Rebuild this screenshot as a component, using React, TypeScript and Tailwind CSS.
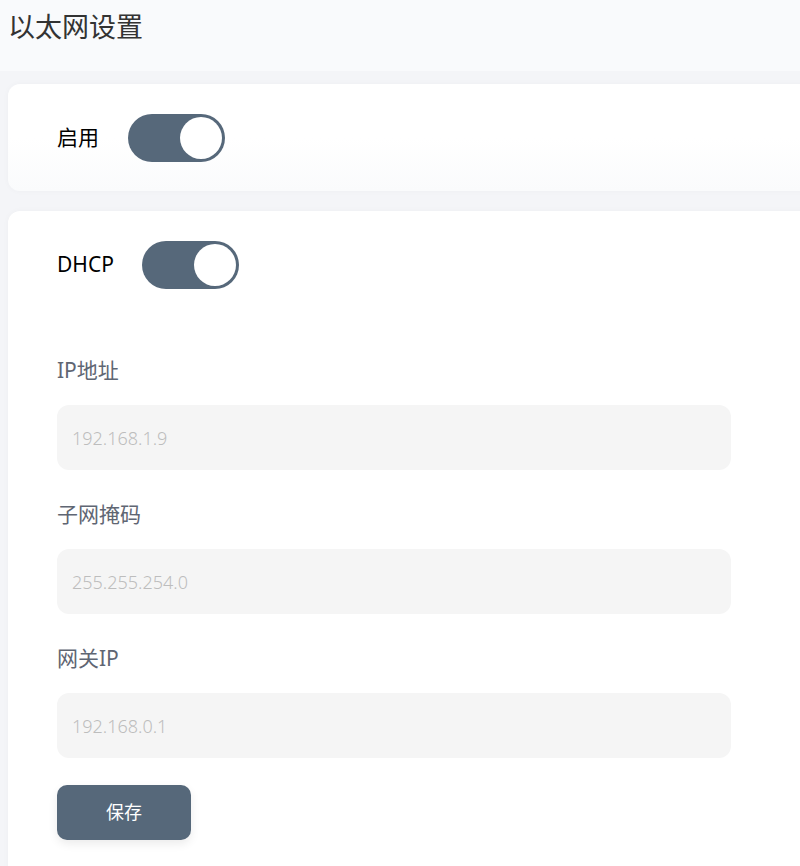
import { useState } from "react";

const FONT = "font-['Noto_Sans','Noto_Sans_CJK_SC',sans-serif]";

// 开关组件
function Toggle({ on, onChange }: { on: boolean; onChange: () => void }) {
  return (
    <button
      type="button"
      onClick={onChange}
      className={`relative h-[48px] w-[97px] shrink-0 rounded-full ${
        on ? "bg-[#56687a]" : "bg-[#cfd4da]"
      }`}
    >
      <span
        className={`absolute top-[3px] h-[42px] w-[42px] rounded-full bg-white ${
          on ? "right-[3px]" : "left-[3px]"
        }`}
      />
    </button>
  );
}

// 表单字段
function Field({ label, value }: { label: string; value: string }) {
  return (
    <div className="flex flex-col">
      <label className="h-[24px] text-[21px] leading-[24px] text-[#5f6673]">
        {label}
      </label>
      <input
        className="mt-[23px] h-[65px] w-[674px] rounded-[12px] bg-[#f5f5f5] px-[15px] text-[18px] font-light text-[#333] placeholder:text-[#bdbdbd] outline-none"
        placeholder={value}
      />
    </div>
  );
}

export default function App() {
  const [enabled, setEnabled] = useState(true);
  const [dhcp, setDhcp] = useState(true);

  return (
    <div className={`${FONT} min-h-[866px] overflow-hidden bg-[#f4f5f8]`}>
      {/* 标题 */}
      <div className="flex h-[71px] items-start bg-[#f9fafc] pl-[8px] pt-[7px]">
        <h1 className="text-[27px] leading-[40px] text-[#333]">以太网设置</h1>
      </div>

      {/* 启用 */}
      <div className="ml-[8px] mt-[13px] flex h-[107px] w-[820px] items-center gap-[29px] rounded-[12px] bg-gradient-to-b from-white from-50% to-[#fafbfc] pl-[49px] shadow-[0_0_6px_rgba(0,0,0,0.03)]">
        <span className="text-[21px] text-black">启用</span>
        <Toggle on={enabled} onChange={() => setEnabled(!enabled)} />
      </div>

      {/* DHCP 与地址 */}
      <div className="ml-[8px] mt-[20px] flex w-[820px] flex-col rounded-[12px] bg-white pb-[40px] pl-[49px] pt-[30px] shadow-[0_0_6px_rgba(0,0,0,0.03)]">
        <div className="flex h-[48px] items-center gap-[28px]">
          <span className="text-[21px] text-black">DHCP</span>
          <Toggle on={dhcp} onChange={() => setDhcp(!dhcp)} />
        </div>

        <div className="mt-[69px] flex flex-col gap-[32px]">
          <Field label="IP地址" value="192.168.1.9" />
          <Field label="子网掩码" value="255.255.254.0" />
          <Field label="网关IP" value="192.168.0.1" />
        </div>

        <button
          type="button"
          className="mt-[27px] h-[55px] w-[134px] rounded-[10px] bg-[#56687a] text-[18px] text-white shadow-[0_4px_10px_rgba(0,0,0,0.08)]"
        >
          保存
        </button>
      </div>
    </div>
  );
}
